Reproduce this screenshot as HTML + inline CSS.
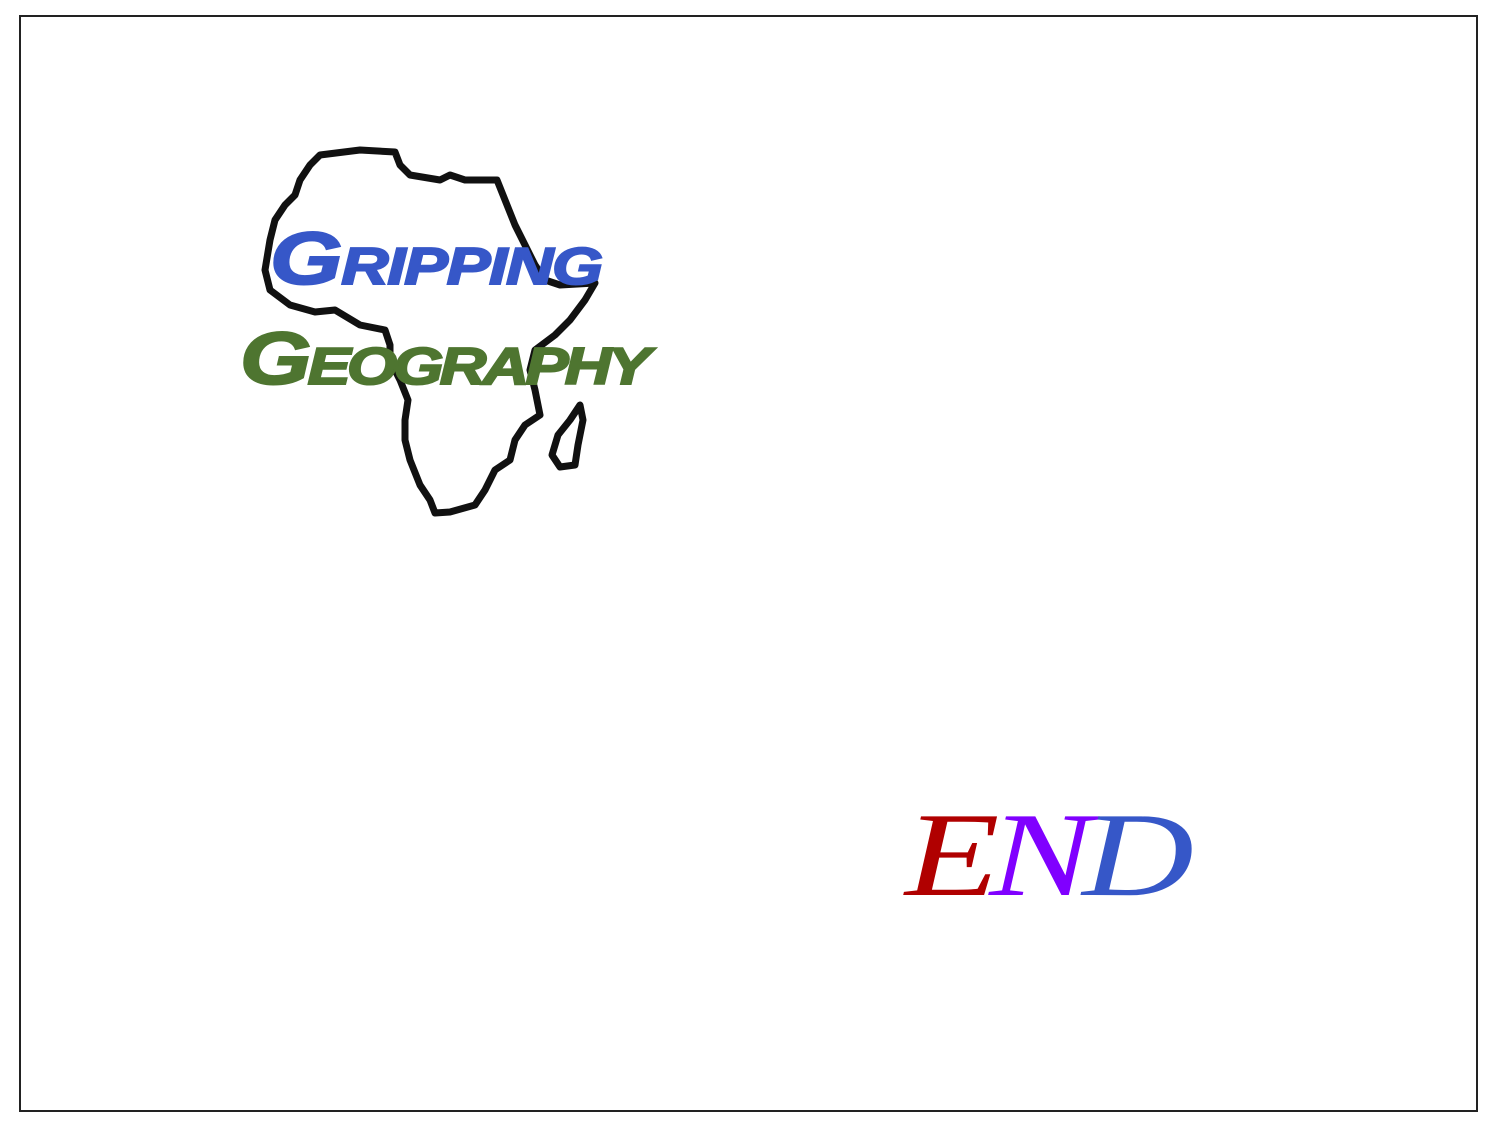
<!DOCTYPE html>
<html><head><meta charset="utf-8"><style>
html,body{margin:0;padding:0;background:#fff;}
body{width:1500px;height:1125px;position:relative;overflow:hidden;}
.frame{position:absolute;left:19px;top:15px;width:1459px;height:1097px;border:2px solid #222;box-sizing:border-box;}
.t{position:absolute;font-family:"Liberation Sans",sans-serif;font-weight:bold;font-style:italic;font-variant:small-caps;white-space:nowrap;line-height:1;transform-origin:0 0;}
.end{position:absolute;font-family:"Liberation Serif",serif;font-style:italic;font-size:120px;line-height:1;white-space:nowrap;transform-origin:0 0;transform:scaleX(1.29);}
</style></head><body>
<div class="frame"></div>
<svg width="1500" height="1125" style="position:absolute;left:0;top:0">
<path d="M320,155 L360,150 L395,152 L400,165 L410,175 L440,180 L450,175 L465,180 L497,180 L505,200 L515,225 L525,245 L535,265 L545,280 L560,285 L595,283 L585,300 L570,320 L555,335 L535,350 L530,370 L535,390 L540,415 L525,425 L515,440 L510,460 L495,470 L485,490 L475,505 L450,512 L435,513 L430,500 L420,485 L410,460 L405,440 L405,420 L408,400 L400,380 L390,360 L390,345 L385,330 L360,325 L335,310 L315,312 L290,305 L270,290 L265,270 L270,240 L275,220 L285,205 L295,195 L300,180 L310,165 Z" fill="none" stroke="#111" stroke-width="7" stroke-linejoin="round"/>
<path d="M580,405 L583,420 L578,445 L575,465 L560,467 L552,455 L558,435 L570,420 Z" fill="none" stroke="#111" stroke-width="7" stroke-linejoin="round"/>
</svg>
<div class="t" style="left:270px;top:222px;font-size:74px;color:#3657c8;letter-spacing:-1px;transform:scaleX(1.26);-webkit-text-stroke:2px #3657c8;">Gripping</div>
<div class="t" style="left:240px;top:322px;font-size:74px;color:#4e7530;letter-spacing:-3px;transform:scaleX(1.24);-webkit-text-stroke:2px #4e7530;">Geography</div>
<div class="end" style="left:905px;top:795px;"><span style="color:#b00000">E</span><span style="color:#8000ff;margin-left:-8px">N</span><span style="color:#3657c8;margin-left:-8px">D</span></div>
</body></html>
